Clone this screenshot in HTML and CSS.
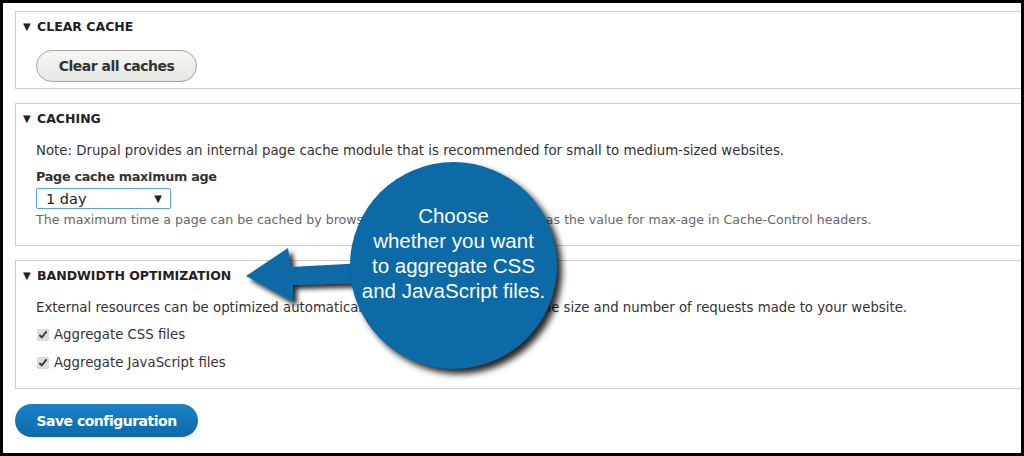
FILE: index.html
```html
<!DOCTYPE html>
<html lang="en">
<head>
    <meta charset="UTF-8">
    <meta name="viewport" content="width=device-width, initial-scale=1.0">
    <title>Performance</title>
    <link rel="stylesheet" href="styles.css">
</head>
<body>
    <div class="page">
        <div class="panel panel-clear">
            <h2 class="panel-title"><span class="toggle">&#9660;</span>Clear cache</h2>
            <button class="btn-clear">Clear all caches</button>
        </div>

        <div class="panel panel-caching">
            <h2 class="panel-title"><span class="toggle">&#9660;</span>Caching</h2>
            <p class="note">Note: Drupal provides an internal page cache module that is recommended for small to medium-sized websites.</p>
            <h4 class="field-label">Page cache maximum age</h4>
            <div class="select"><span>1 day</span><span class="select-arrow">&#9660;</span></div>
            <p class="desc">The maximum time a page can be cached by browsers and proxies. This is used as the value for max-age in Cache-Control headers.</p>
        </div>

        <div class="panel panel-bandwidth">
            <h2 class="panel-title"><span class="toggle">&#9660;</span>Bandwidth optimization</h2>
            <p class="note">External resources can be optimized automatically, which can reduce both the size and number of requests made to your website.</p>
            <label class="check check-first"><input type="checkbox" checked> Aggregate CSS files</label>
            <label class="check"><input type="checkbox" checked> Aggregate JavaScript files</label>
        </div>

        <button class="btn-save">Save configuration</button>

        <svg class="arrow" width="130" height="76" viewBox="0 0 130 76">
            <defs>
                <filter id="shadow" x="-20%" y="-20%" width="150%" height="160%">
                    <feDropShadow dx="4" dy="4" stdDeviation="2.5" flood-color="#000" flood-opacity="0.85"/>
                </filter>
            </defs>
            <polygon points="6,44 48,16 51,35 125,31 125,51 53,53 53,70" fill="#0c6aa6" filter="url(#shadow)"/>
        </svg>

        <div class="bubble">
            <p>Choose<br>whether you want<br>to aggregate CSS<br>and JavaScript files.</p>
        </div>
    </div>
</body>
</html>
```

FILE: styles.css
```css
body {
    margin: 0;
    background: #000;
    font-family: "DejaVu Sans", Verdana, sans-serif;
    color: #333;
}

.page {
    position: relative;
    margin: 3px;
    height: 450px;
    background: #fff;
    overflow: hidden;
    padding-top: 8px;
    box-sizing: border-box;
}

.panel {
    border: 1px solid #ccc;
    margin: 0 -10px 14px 12px;
    padding: 7px 20px 6px 20px;
}

.panel-title {
    margin: 0 0 0 -13px;
    font-size: 12.5px;
    line-height: 16px;
    font-weight: bold;
    text-transform: uppercase;
    color: #222;
}

.toggle {
    display: inline-block;
    width: 14px;
    font-size: 10px;
    vertical-align: 1px;
}

.btn-clear {
    display: block;
    margin-top: 15px;
    height: 32px;
    width: 161px;
    border: 1px solid #a6a6a6;
    border-radius: 16px;
    background: linear-gradient(#f6f6f3, #e6e6e2);
    font-family: "DejaVu Sans", Verdana, sans-serif;
    font-size: 14px;
    font-weight: bold;
    letter-spacing: -0.5px;
    color: #333;
}

.note {
    margin: 15px 0 0;
    font-size: 13.3px;
    line-height: 18px;
}

.field-label {
    margin: 8px 0 0;
    font-size: 12.8px;
    letter-spacing: -0.3px;
    line-height: 18px;
}

.select {
    display: flex;
    justify-content: space-between;
    align-items: center;
    box-sizing: border-box;
    width: 135px;
    height: 21px;
    margin-top: 2px;
    padding: 0 8px 0 9px;
    border: 1px solid #5aa4e0;
    border-radius: 2px;
    font-size: 14.5px;
    color: #222;
}

.select-arrow {
    font-size: 10px;
}

.desc {
    margin: 3px 0 11px;
    font-size: 12.6px;
    line-height: 16px;
    color: #666;
}

.check {
    display: flex;
    align-items: center;
    gap: 5px;
    margin-top: 10px;
    font-size: 13.3px;
    line-height: 18px;
}

.check-first {
    margin-top: 9px;
}

.panel-bandwidth {
    padding-bottom: 16px;
    margin-bottom: 15px;
}

.check input {
    margin: 0 0 0 1px;
    width: 12px;
    height: 12px;
    accent-color: #dcdcdc;
}

.btn-save {
    display: block;
    margin-left: 12px;
    height: 33px;
    width: 183px;
    border: none;
    border-radius: 17px;
    background: linear-gradient(#1a82c6, #0a6aad);
    font-family: "DejaVu Sans", Verdana, sans-serif;
    font-size: 14px;
    font-weight: bold;
    letter-spacing: -0.5px;
    color: #fff;
}

.arrow {
    position: absolute;
    left: 237px;
    top: 229px;
}

.bubble {
    position: absolute;
    left: 347px;
    top: 159px;
    width: 207px;
    height: 207px;
    border-radius: 50%;
    background: #0c6aa6;
    box-shadow: 5px 5px 6px rgba(0, 0, 0, 0.85);
    color: #fff;
    text-align: center;
    font-family: "Liberation Sans", Arial, sans-serif;
    font-size: 20.5px;
}

.bubble p {
    margin: 41px 0 0;
    line-height: 25px;
}
```
